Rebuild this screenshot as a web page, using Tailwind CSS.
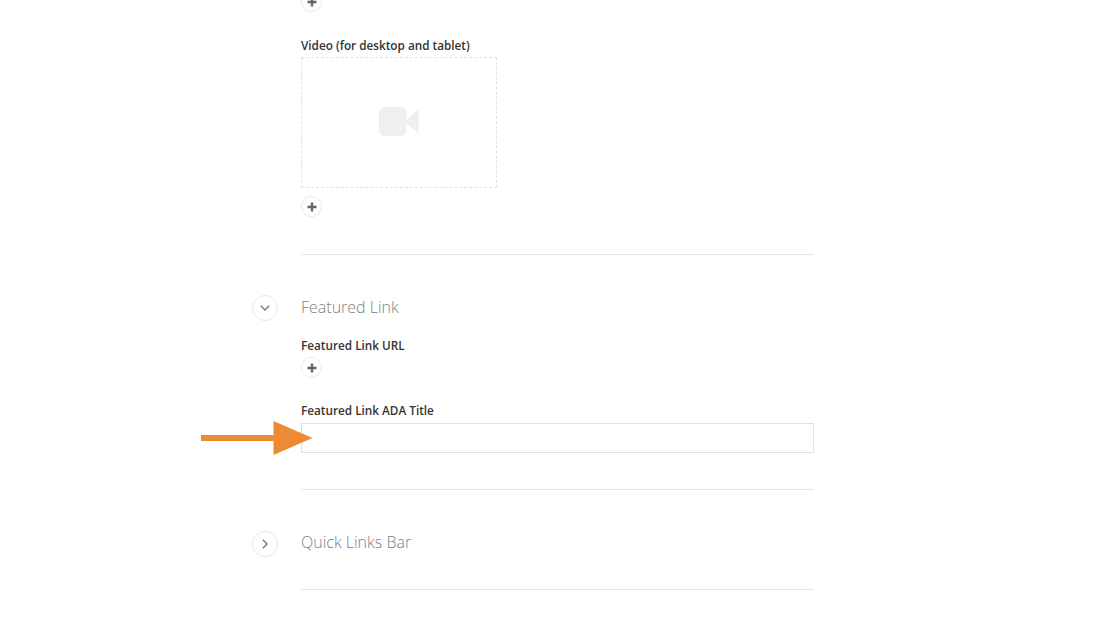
<!DOCTYPE html>
<html><head><meta charset="utf-8">
<title>Featured Link</title>
<script src="https://cdn.jsdelivr.net/npm/@tailwindcss/browser@4"></script>
</head>
<body class="bg-white overflow-hidden font-['Open_Sans',sans-serif] text-[#333]">
  <div class="relative w-[1120px] h-[626px] overflow-hidden">
    <main class="w-[562px] ml-[252px] -mt-[9px] flex flex-col">

      <div class="pl-[49px]">
        <button class="w-[21px] h-[21px] rounded-full border border-[#e8e8e8] bg-white flex items-center justify-center">
          <svg width="10" height="10" viewBox="0 0 10 10"><path d="M5 .5v9M.5 5h9" stroke="#666" stroke-width="2.400"/></svg>
        </button>
        <label class="block mt-[23px] h-[22px] leading-[20px] text-[11.75px] font-semibold">Video (for desktop and tablet)</label>
        <div class="w-[196px] h-[131px] border border-dashed border-[#e2e2e2] flex items-center justify-center">
          <svg class="-mt-[2px]" width="40" height="29" viewBox="0 0 40 29"><rect x="0" y="0" width="27.500" height="29" rx="6" fill="#efefef"/><path d="M26 14.500 39.500 1.500V27.500Z" fill="#efefef"/></svg>
        </div>
        <button class="mt-[8px] w-[21px] h-[21px] rounded-full border border-[#e8e8e8] bg-white flex items-center justify-center">
          <svg width="10" height="10" viewBox="0 0 10 10"><path d="M5 .5v9M.5 5h9" stroke="#666" stroke-width="2.400"/></svg>
        </button>
        <hr class="mt-[37px] border-t border-[#e4e4e4]">
      </div>

      <section class="mt-[40px]">
        <div class="flex items-center gap-[23px] h-[26px]">
          <button class="w-[26px] h-[26px] shrink-0 rounded-full border border-[#e8e8e8] bg-white flex items-center justify-center">
            <svg width="10" height="6" viewBox="0 0 10 6"><path d="M.8.8 5 5 9.200.8" fill="none" stroke="#777" stroke-width="1.400"/></svg>
          </button>
          <h2 class="text-[16px] font-light text-[#808080] -mt-[2px]">Featured Link</h2>
        </div>
        <div class="pl-[49px]">
          <label class="block mt-[14px] h-[22px] leading-[20px] text-[11.75px] font-semibold">Featured Link URL</label>
          <button class="w-[21px] h-[21px] rounded-full border border-[#e8e8e8] bg-white flex items-center justify-center">
            <svg width="10" height="10" viewBox="0 0 10 10"><path d="M5 .5v9M.5 5h9" stroke="#666" stroke-width="2.400"/></svg>
          </button>
          <label class="block mt-[22px] h-[23px] leading-[20px] text-[11.75px] font-semibold">Featured Link ADA Title</label>
          <input type="text" class="block w-full h-[30px] border border-[#e0e0e0] bg-white">
          <hr class="mt-[36px] border-t border-[#e4e4e4]">
        </div>
      </section>

      <section class="mt-[41px]">
        <div class="flex items-center gap-[23px] h-[26px]">
          <button class="w-[26px] h-[26px] shrink-0 rounded-full border border-[#e8e8e8] bg-white flex items-center justify-center">
            <svg width="6" height="10" viewBox="0 0 6 10"><path d="M.8.8 5 5 .8 9.200" fill="none" stroke="#777" stroke-width="1.400"/></svg>
          </button>
          <h2 class="text-[16px] font-light text-[#808080] -mt-[4px]">Quick Links Bar</h2>
        </div>
        <div class="pl-[49px]">
          <hr class="mt-[32px] border-t border-[#e4e4e4]">
        </div>
      </section>
    </main>

    <!-- annotation arrow sits over the input -->
    <svg class="absolute left-[201px] top-[421px]" width="112" height="34" viewBox="0 0 112 34">
      <path d="M0 14H72.500V0L111.500 17 72.500 34V20H0Z" fill="#ec8b34"/>
    </svg>
  </div>
</body></html>
